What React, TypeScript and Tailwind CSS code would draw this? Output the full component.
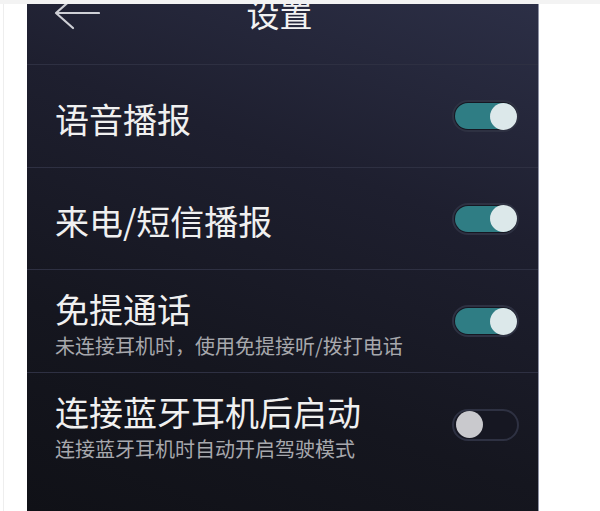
import React from 'react';

const font = { fontFamily: '"Noto Sans CJK SC", "Noto Sans", sans-serif' };

interface SettingRow {
  title: string;
  desc?: string;
  on: boolean;
  h: string;
}

const rows: SettingRow[] = [
  { title: '语音播报', on: true, h: 'h-[103px] border-b' },
  { title: '来电/短信播报', on: true, h: 'h-[102px] border-b' },
  { title: '免提通话', desc: '未连接耳机时，使用免提接听/拨打电话', on: true, h: 'h-[103px] border-b' },
  { title: '连接蓝牙耳机后启动', desc: '连接蓝牙耳机时自动开启驾驶模式', on: false, h: 'h-[103px]' },
];

function Toggle({ on }: { on: boolean }) {
  return (
    <div className="w-[67px] h-[32px] rounded-full border-2 border-[#2e3142] bg-[#161722] p-[1px]">
      {on ? (
        <div className="flex h-full w-full items-center justify-end rounded-full bg-[#2f7d84]">
          <div className="h-[27px] w-[27px] rounded-full bg-[#dce8ea] -mr-[1px]" />
        </div>
      ) : (
        <div className="flex h-full w-full items-center justify-start rounded-full">
          <div className="h-[27px] w-[27px] rounded-full bg-[#c9c9cd] ml-[1px]" />
        </div>
      )}
    </div>
  );
}

export default function App() {
  return (
    <div className="w-[600px] h-[511px] bg-white overflow-hidden" style={font}>
      {/* 上方灰条 */}
      <div className="h-[4px] bg-[#f3f3f3]" />

      <div className="flex h-[507px]">
        <div className="w-[27px] pl-[3px]">
          <div className="h-full w-px bg-[#eeeeee]" />
        </div>

        {/* 手机画面 */}
        <div className="w-[512px] h-full overflow-hidden border-r border-[#8e92a5] bg-[linear-gradient(200deg,#2c2f46_0%,#1e1f2f_35%,#15161f_70%,#101117_100%)]">
          {/* 标题栏（上半部分被截掉） */}
          <div className="h-[61px] border-b border-[#2e3042]">
            <div className="grid h-[20px] grid-rows-[20px] grid-cols-[1fr_auto_1fr] items-center">
              <div className="pl-[27px] flex items-center h-[20px]">
                <svg width="46" height="34" viewBox="0 0 46 34" fill="none" className="shrink-0 -mt-[2px]">
                  <path d="M2 17H45M19 2L2 17L19 32" stroke="#cfd0d6" strokeWidth="2.2" strokeLinecap="round" strokeLinejoin="round" />
                </svg>
              </div>
              <div className="h-[20px] flex items-center">
                <span className="text-[33px] leading-none text-[#f2f2f2] -ml-[6px] -mt-[2px]">设置</span>
              </div>
              <div />
            </div>
          </div>

          {rows.map((r) => (
            <div key={r.title} className={`flex items-center justify-between pl-[28px] pr-[19px] border-[#2e3042] ${r.h}`}>
              <div className="mt-[5px] flex flex-col gap-[10px]">
                <span className="text-[34px] leading-[34px] text-[#f0f0f0]">{r.title}</span>
                {r.desc && <span className="text-[20px] leading-[20px] text-[#a7a8ad]">{r.desc}</span>}
              </div>
              <Toggle on={r.on} />
            </div>
          ))}
        </div>
      </div>
    </div>
  );
}
